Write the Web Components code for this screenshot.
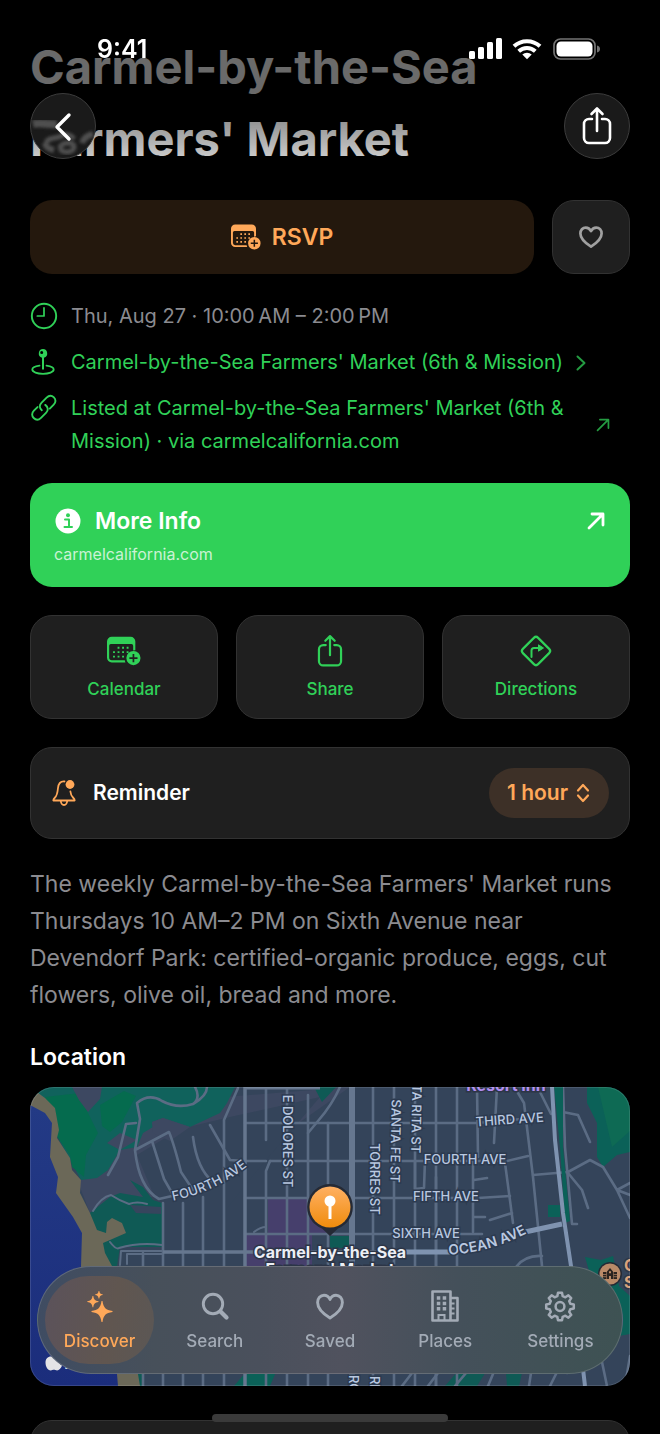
<!DOCTYPE html>
<html lang="en">
<head>
<meta charset="utf-8">
<meta name="viewport" content="width=device-width, initial-scale=1">
<title>Carmel-by-the-Sea Farmers' Market</title>
<style>
    :root {
        --green: #30d158;
        --orange: #ffa859;
        --card: #1f1f1f;
        --line: #323232;
        --muted: #8b8b90;
    }
    body {
        margin: 0;
        height: 100vh;
        overflow: hidden;
        background: #000;
        color: #fff;
        font-family: Inter, "Liberation Sans", sans-serif;
    }
</style>
</head>
<body>
<event-screen></event-screen>

<script>
const icons = {
    back: ['0 0 32 32', '<path d="M21 4 9 16l12 12" fill="none" stroke="currentColor" stroke-width="3.4" stroke-linecap="round" stroke-linejoin="round"/>'],
    share: ['0 0 32 40', '<g fill="none" stroke="currentColor" stroke-width="2.6" stroke-linecap="round" stroke-linejoin="round"><path d="M11 13H8a5 5 0 0 0-5 5v14a5 5 0 0 0 5 5h16a5 5 0 0 0 5-5V18a5 5 0 0 0-5-5h-3M16 25V3M10.500 8 16 2.500 21.500 8"/></g>'],
    calendar: ['0 0 36 30', '<path fill="currentColor" fill-rule="evenodd" d="M5 0h20a5 5 0 0 1 5 5v9.200a8.500 8.500 0 0 0-2.300.400V9.500a1.800 1.800 0 0 0-1.800-1.800H4.100a1.800 1.800 0 0 0-1.800 1.800V22a2.800 2.800 0 0 0 2.800 2.800h13.700a9 9 0 0 0 .7 2.300H5a5 5 0 0 1-5-5V5a5 5 0 0 1 5-5z"/><path fill="currentColor" d="M11.200 10.500h2v2h-2zM16 10.500h2v2h-2zM20.800 10.500h2v2h-2zM6.400 15.200h2v2h-2zM11.200 15.200h2v2h-2zM16 15.200h2v2h-2zM20.800 15.200h2v2h-2zM6.400 19.900h2v2h-2zM11.200 19.900h2v2h-2zM16 19.900h2v2h-2z"/><path fill="currentColor" fill-rule="evenodd" d="M28 15a7.500 7.500 0 1 1 0 15 7.500 7.500 0 0 1 0-15zm-.9 3.200v3.400h-3.400v1.800h3.400v3.400h1.800v-3.400h3.400v-1.800h-3.400v-3.400z"/>'],
    heart: ['0 0 28 26', '<path d="M14 23.500C10 21 2.500 15.500 2.500 9.300 2.500 5.500 5 2.800 8.300 2.800c2.500 0 4.500 1.400 5.700 3.800 1.200-2.400 3.200-3.800 5.700-3.800 3.300 0 5.800 2.700 5.800 6.500 0 6.200-7.500 11.700-11.500 14.200z" fill="none" stroke="currentColor" stroke-width="2.900" stroke-linejoin="round"/>'],
    clock: ['0 0 26 26', '<circle cx="13" cy="13" r="11.300" fill="none" stroke="currentColor" stroke-width="1.800"/><path d="M13 5.500V13H6.800" fill="none" stroke="currentColor" stroke-width="1.600" stroke-linecap="round" stroke-linejoin="round"/>'],
    pin: ['0 0 26 28', '<path fill="currentColor" fill-rule="evenodd" d="M12 1a4.500 4.500 0 0 1 1 8.800V21.500h-2V9.800A4.500 4.500 0 0 1 12 1zm-1.300 1.900a1.500 1.500 0 1 0 0 3 1.500 1.500 0 0 0 0-3z"/><path d="M8.500 17.700c-4.200.500-7.200 2-7.200 3.900 0 2.400 4.800 4.200 10.700 4.200s10.700-1.800 10.700-4.200c0-1.900-3-3.400-7.200-3.900" fill="none" stroke="currentColor" stroke-width="1.800" stroke-linecap="round"/>'],
    link: ['0 0 28 28', '<g fill="none" stroke="currentColor" stroke-width="1.900" stroke-linecap="round"><path d="M11.800 16.200c-2.600-2.200-2.600-5.200-.4-7.400l5.200-5.200c2.300-2.300 5.200-2.300 7.300-.2s2.100 5-.2 7.300l-3.900 3.900"/><path d="M15.300 10.900c2.900 2 3.200 5.400.9 7.700l-5.200 5.200c-2.300 2.300-5.200 2.300-7.300.2s-2.100-5 .2-7.300l3.600-3.600"/></g>'],
    chevron: ['0 0 10 16', '<path d="M1.500 1.500 8.500 8l-7 6.500" fill="none" stroke="currentColor" stroke-width="2" stroke-linecap="round" stroke-linejoin="round"/>'],
    out: ['0 0 18 18', '<path d="M2 16 15.500 2.500M5 2h11v11" fill="none" stroke="currentColor" stroke-width="var(--stroke, 2)" stroke-linecap="round" stroke-linejoin="round"/>'],
    info: ['0 0 26 26', '<circle cx="13" cy="13" r="12.500" fill="currentColor"/><circle cx="13" cy="7.300" r="2" fill="#30d158"/><path d="M10 11.500h4v7.300M9.500 19h7.500" fill="none" stroke="#30d158" stroke-width="2" stroke-linecap="round" stroke-linejoin="round"/>'],
    directions: ['0 0 34 34', '<rect x="6.200" y="6.200" width="21.600" height="21.600" rx="3" transform="rotate(45 17 17)" fill="none" stroke="currentColor" stroke-width="2.200"/><path d="M12.500 23v-6.500a2.500 2.500 0 0 1 2.500-2.500h4" fill="none" stroke="currentColor" stroke-width="2" stroke-linecap="round"/><path d="M19.500 10.800v6.400l5-3.200z" fill="currentColor" stroke="currentColor" stroke-linejoin="round"/>'],
    bell: ['0 0 26 28', '<g fill="none" stroke="currentColor" stroke-width="1.800" stroke-linecap="round" stroke-linejoin="round"><path d="M13.500 2.500C10 2.200 7.500 4.500 7 9c-.5 5-.8 7.500-3 9.500-1.200 1.200-1.800 1.900-1.700 3h21.400c.1-1.100-.5-1.800-1.700-3-1.600-1.500-2.300-3.200-2.600-6"/><path d="M9.800 22c.3 2.600 1.600 4 3.200 4s2.900-1.400 3.200-4"/></g><circle cx="19" cy="5.500" r="4.400" fill="currentColor"/>'],
    updown: ['0 0 14 20', '<path d="M2 7.500 7 2l5 5.500M2 12.500 7 18l5-5.500" fill="none" stroke="currentColor" stroke-width="2.200" stroke-linecap="round" stroke-linejoin="round"/>'],
    sparkles: ['0 0 32 34', '<path fill="currentColor" d="M18.500 12c.9 6.700 3.300 9.100 10 10v1c-6.700.9-9.100 3.300-10 10h-1c-.9-6.700-3.300-9.100-10-10v-1c6.700-.9 9.100-3.300 10-10zM9.300 7c.5 3.500 1.700 4.700 5.200 5.200v.8c-3.500.5-4.700 1.700-5.200 5.200h-.8c-.5-3.500-1.700-4.700-5.200-5.200v-.8C6.800 11.700 8 10.500 8.500 7zM15.300 2c.3 2.300 1.200 3.100 3.500 3.400v.7c-2.300.3-3.200 1.200-3.500 3.500h-.7c-.3-2.300-1.200-3.200-3.500-3.500v-.7c2.300-.3 3.200-1.100 3.500-3.400z"/>'],
    search: ['0 0 32 34', '<circle cx="14" cy="15" r="9.700" fill="none" stroke="currentColor" stroke-width="2.900"/><path d="m21.500 22.500 6 6" stroke="currentColor" stroke-width="4.200" stroke-linecap="round"/>'],
    saved: ['0 0 32 34', '<path d="M16 29C11.600 26.300 3.600 20.500 3.600 13.500 3.600 9.300 6.400 6.300 10 6.300c2.700 0 4.700 1.500 6 4.100 1.300-2.600 3.300-4.100 6-4.100 3.600 0 6.400 3 6.400 7.200 0 7-8 12.800-12.400 15.500z" fill="none" stroke="currentColor" stroke-width="2.900" stroke-linejoin="round"/>'],
    places: ['0 0 32 34', '<path d="M3.500 2.500h18v29h-18zM21.500 9h7v22.500h-7" fill="none" stroke="currentColor" stroke-width="2.600" stroke-linejoin="round"/><path fill="currentColor" d="M7.800 7.300h3.500v3.500H7.800zM13.700 7.300h3.500v3.500h-3.500zM7.800 12.700h3.500v3.500H7.800zM13.700 12.700h3.500v3.500h-3.500zM7.800 18.100h3.500v3.500H7.800zM13.700 18.100h3.500v3.500h-3.500zM22 13.500h3.500v2H22zM22 18.500h3.500v2H22zM22 23.500h3.500v2H22z"/><path d="M9.500 31v-5h6v5" fill="none" stroke="currentColor" stroke-width="2"/>'],
    settings: ['0 0 32 34', '<g fill="none" stroke="currentColor" stroke-width="2.500" stroke-linejoin="round"><path d="M13.300 7.200 14 3.700h4l.7 3.500 2.700 1.100 3-2 2.800 2.800-2 3 1.100 2.700 3.500.7v4l-3.500.7-1.100 2.700 2 3-2.800 2.800-3-2-2.700 1.100-.7 3.500h-4l-.7-3.500-2.700-1.100-3 2-2.800-2.800 2-3-1.100-2.700-3.500-.7v-4l3.500-.7 1.100-2.700-2-3 2.800-2.800 3 2z"/><circle cx="16" cy="17.500" r="4.400"/></g>'],
    signal: ['0 0 33 22', '<g fill="currentColor"><rect y="13" width="6" height="8" rx="1.500"/><rect x="9" y="9" width="6" height="12" rx="1.500"/><rect x="18" y="4" width="6" height="17" rx="1.500"/><rect x="27" y="0" width="6" height="21" rx="1.500"/></g>'],
    wifi: ['0 0 30 22', '<path d="M2 8.300a19 19 0 0 1 26 0M6.700 13.200a12.200 12.200 0 0 1 16.600 0" fill="none" stroke="currentColor" stroke-width="4"/><path fill="currentColor" d="m15 21.300-4.700-4.700a7 7 0 0 1 9.400 0z"/>'],
    battery: ['0 0 47 22', '<rect x="1" y="1" width="41" height="20" rx="6.500" fill="none" stroke="#737373" stroke-width="1.700"/><rect x="3.500" y="3.500" width="36" height="15" rx="4.500" fill="currentColor"/><path d="M44 7.500c2 .5 3 1.800 3 3.500s-1 3-3 3.500z" fill="#737373"/>']
};

class AppIcon extends HTMLElement {
    constructor() {
        super();
        const [box, shape] = icons[this.getAttribute("name")];

        this.attachShadow({ mode: 'open' });
        this.shadowRoot.innerHTML = `
            <style>
                :host { display: block; flex: none; width: 32px; height: 32px; }
                svg { display: block; width: 100%; height: 100%; }
            </style>
            <svg viewBox="${box}" aria-hidden="true">${shape}</svg>
        `;
    }
}

class StatusBar extends HTMLElement {
    constructor() {
        super();
        this.attachShadow({ mode: 'open' });
        this.shadowRoot.innerHTML = `
            <style>
                :host {
                    display: flex;
                    align-items: center;
                    height: 24px;
                    padding: 37px 60px 0 97px;
                    font-size: 25px;
                    line-height: 24px;
                    font-weight: 600;
                }
                time { flex: 1; }
                app-icon { height: 22px; }
                .signal { width: 33px; }
                .wifi { width: 30px; margin: 0 11px 0 10px; }
                .battery { width: 47px; }
            </style>
            <time>9:41</time>
            <app-icon class="signal" name="signal"></app-icon>
            <app-icon class="wifi" name="wifi"></app-icon>
            <app-icon class="battery" name="battery"></app-icon>
        `;
    }
}

class RoundButton extends HTMLElement {
    constructor() {
        super();
        this.attachShadow({ mode: 'open' });
        this.shadowRoot.innerHTML = `
            <style>
                :host { display: block; width: 66px; height: 66px; }
                button {
                    display: grid;
                    place-items: center;
                    width: 100%;
                    height: 100%;
                    padding: 0;
                    overflow: hidden;
                    border: 1px solid #3c3c3c;
                    border-radius: 50%;
                    background: #1a1a1a;
                    color: #fff;
                }
                button > *, ::slotted(*) { grid-area: 1 / 1; }
            </style>
            <button aria-label="${this.getAttribute("label")}"><slot></slot></button>
        `;
    }
}

class TopBar extends HTMLElement {
    constructor() {
        super();
        this.attachShadow({ mode: 'open' });
        this.shadowRoot.innerHTML = `
            <style>
                :host {
                    display: block;
                    height: 190px;
                    background: linear-gradient(rgba(0,0,0,.55) 0, rgba(0,0,0,.55) 94px, rgba(0,0,0,.12) 160px, transparent);
                }
                .actions {
                    display: flex;
                    justify-content: space-between;
                    padding: 32px 30px 0;
                }
                .glass { width: 66px; height: 66px; }
                .back { width: 32px; height: 32px; }
                .share { width: 32px; height: 40px; }
            </style>
            <status-bar></status-bar>
            <div class="actions">
                <round-button label="Back">
                    <svg class="glass" viewBox="0 0 66 66" aria-hidden="true">
                        <defs><filter id="soft"><feGaussianBlur stdDeviation="1.5"/></filter></defs>
                        <g fill="none" stroke="#505050" filter="url(#soft)">
                            <path d="M2 30c8-2 15 1 24 0" stroke-width="8"/>
                            <path d="M15 49c2-6 9-4 15-7 5-3 10-1 13 3M29 54c1-6 14-7 14-1s-12 7-14 1" stroke-width="5"/>
                            <path d="M14 49c1 5 5 6 9 7M62 40c-5 1-9 4-11 9" stroke-width="6"/>
                        </g>
                    </svg>
                    <app-icon class="back" name="back"></app-icon>
                </round-button>
                <round-button label="Share">
                    <app-icon class="share" name="share"></app-icon>
                </round-button>
            </div>
        `;
    }
}

class RsvpRow extends HTMLElement {
    constructor() {
        super();
        this.attachShadow({ mode: 'open' });
        this.shadowRoot.innerHTML = `
            <style>
                :host { display: flex; gap: 18px; height: 74px; }
                button {
                    display: flex;
                    align-items: center;
                    justify-content: center;
                    padding: 0;
                    font: inherit;
                    border-radius: 22px;
                }
                .rsvp {
                    flex: 1;
                    gap: 11px;
                    border: 0;
                    background: #24180d;
                    color: var(--orange);
                    font-size: 23px;
                    font-weight: 600;
                }
                .rsvp app-icon { width: 30px; height: 26px; }
                .save {
                    width: 78px;
                    border: 1px solid var(--line);
                    background: var(--card);
                    color: #a0a0a0;
                }
                .save app-icon { width: 26px; height: 24px; }
            </style>
            <button class="rsvp"><app-icon name="calendar"></app-icon>RSVP</button>
            <button class="save" aria-label="Save"><app-icon name="heart"></app-icon></button>
        `;
    }
}

class DetailRow extends HTMLElement {
    constructor() {
        super();
        const href = this.getAttribute("href");
        const end = this.getAttribute("end");
        const tag = href ? 'a' : 'div';

        this.attachShadow({ mode: 'open' });
        this.shadowRoot.innerHTML = `
            <style>
                :host { display: block; font-size: 20px; line-height: 33px; }
                .row {
                    display: flex;
                    gap: 13px;
                    padding-right: 20px;
                    color: var(--muted);
                    text-decoration: none;
                }
                a.row { color: var(--green); }
                .lead { width: 28px; height: 28px; margin-top: 2px; color: var(--green); }
                .end { align-self: center; opacity: .75; --stroke: 2.200; }
                .end[name="chevron"] { width: 10px; height: 16px; }
                .end[name="out"] { width: 14px; height: 14px; margin-left: 3px; }
            </style>
            <${tag} class="row" ${href ? `href="${href}"` : ''}>
                <app-icon class="lead" name="${this.getAttribute("icon")}"></app-icon>
                <span><slot></slot></span>
                ${end ? `<app-icon class="end" name="${end}"></app-icon>` : ''}
            </${tag}>
        `;
    }
}

class InfoBanner extends HTMLElement {
    constructor() {
        super();
        this.attachShadow({ mode: 'open' });
        this.shadowRoot.innerHTML = `
            <style>
                :host { display: block; }
                a {
                    display: block;
                    padding: 22px 25px 20px 24px;
                    border-radius: 22px;
                    background: var(--green);
                    color: #fff;
                    text-decoration: none;
                }
                .head {
                    display: flex;
                    align-items: center;
                    font-size: 23px;
                    line-height: 32px;
                    font-weight: 600;
                }
                .head span { flex: 1; margin-left: 13px; }
                .head app-icon { width: 28px; height: 26px; }
                .head .out { width: 18px; height: 18px; --stroke: 2.800; }
                small {
                    display: block;
                    margin-top: 4px;
                    font-size: 16px;
                    line-height: 26px;
                    color: rgba(255, 255, 255, .75);
                }
            </style>
            <a href="#info">
                <div class="head">
                    <app-icon name="info"></app-icon>
                    <span>More Info</span>
                    <app-icon class="out" name="out"></app-icon>
                </div>
                <small><slot></slot></small>
            </a>
        `;
    }
}

class ActionCard extends HTMLElement {
    constructor() {
        super();
        this.attachShadow({ mode: 'open' });
        this.shadowRoot.innerHTML = `
            <style>
                :host { display: block; }
                button {
                    display: flex;
                    flex-direction: column;
                    align-items: center;
                    gap: 9px;
                    width: 100%;
                    padding: 18px 0 17px;
                    border: 1px solid var(--line);
                    border-radius: 22px;
                    background: var(--card);
                    color: var(--green);
                    font: 500 17px/24px Inter, "Liberation Sans", sans-serif;
                }
                app-icon { width: 34px; height: 34px; }
            </style>
            <button>
                <app-icon name="${this.getAttribute("icon")}"></app-icon>
                <slot></slot>
            </button>
        `;
    }
}

class ReminderRow extends HTMLElement {
    constructor() {
        super();
        this.attachShadow({ mode: 'open' });
        this.shadowRoot.innerHTML = `
            <style>
                :host {
                    display: flex;
                    align-items: center;
                    padding: 20px;
                    border: 1px solid var(--line);
                    border-radius: 22px;
                    background: var(--card);
                    font-size: 21px;
                    line-height: 28px;
                    font-weight: 600;
                }
                .bell { width: 26px; height: 28px; color: var(--orange); }
                label { flex: 1; margin-left: 16px; }
                .pick { display: grid; align-items: center; color: var(--orange); }
                .pick > * { grid-area: 1 / 1; }
                select {
                    appearance: none;
                    width: 120px;
                    height: 50px;
                    padding: 0 18px;
                    border: 0;
                    border-radius: 25px;
                    background: #3d3027;
                    color: inherit;
                    font: inherit;
                }
                .pick app-icon {
                    justify-self: end;
                    width: 14px;
                    height: 20px;
                    margin-right: 19px;
                    pointer-events: none;
                }
            </style>
            <app-icon class="bell" name="bell"></app-icon>
            <label for="lead">Reminder</label>
            <div class="pick">
                <select id="lead"><option>1 hour</option></select>
                <app-icon name="updown"></app-icon>
            </div>
        `;
    }
}

class LocationMap extends HTMLElement {
    constructor() {
        super();
        this.attachShadow({ mode: 'open' });
        this.shadowRoot.innerHTML = `
            <style>
                :host {
                    display: block;
                    height: 299px;
                    overflow: hidden;
                    border-radius: 24px;
                    background: #34445a;
                }
                svg { display: block; width: 100%; height: 100%; }
                text { font-family: Inter, "Liberation Sans", sans-serif; }
                .street text {
                    font-size: 13px;
                    font-weight: 500;
                    fill: #b9c8e0;
                    stroke: #2c3a4f;
                    stroke-width: 3px;
                    paint-order: stroke;
                    text-anchor: middle;
                }
                .street .major { font-size: 14px; font-weight: 600; }
                .place {
                    font-size: 16px;
                    font-weight: 700;
                    fill: #eceff5;
                    stroke: #2c3547;
                    stroke-width: 3px;
                    paint-order: stroke;
                    text-anchor: middle;
                }
            </style>
            <svg viewBox="0 0 600 299" preserveAspectRatio="xMidYMid slice" role="img" aria-label="Map">
                <defs>
                    <linearGradient id="water" x2="0" y2="1"><stop stop-color="#233a85"/><stop offset="1" stop-color="#1b2d7c"/></linearGradient>
                    <linearGradient id="pin" x2="0" y2="1"><stop stop-color="#ffb063"/><stop offset="1" stop-color="#f08c0c"/></linearGradient>
                    <path id="fourth" d="M141 114Q184 106 219 78"/>
                    <path id="ocean" d="M412 168Q460 167 503 143"/>
                </defs>

                <!-- land cover -->
                <path fill="#3d4861" d="M120 30 195 10 320 0 220 70 140 110 100 110 60 126 48 95 90 60z"/>
                <path fill="#34445a" d="M107 68 150 42 200 30 290 10 230 80 190 130 133 130z"/>
                <path fill="#10625c" d="M0 0h205l-8 16-7 10-30 14-27-9-11 4 1 5-10 6-6 14-17 3-12 20-11 8-16 2z"/>
                <path fill="#056b4e" d="M15 10 50 6l8 20 10 20-12 22-2 22-12-10-2-12-14-20zM70 18l24-14 12 5-14 26-12 10-8-6z"/>
                <path fill="#3d4861" d="M42 0h30l-2 12-12 13-9-12zM77 56l13-10 17 7-17 10zM122 35l11-4 27 9-20 14-17-8z"/>
                <path fill="#0f5a55" d="M60 126 80 110 90 106l23 4-13-17 13 7 10 13 9 3 1 44H90l-3 19h-6l-21-33z"/>
                <path fill="#36455d" d="m100 118 31 2v7l-25-1z"/>
                <path fill="#463f6c" d="M238 112h64v35h-20v33h-67v-33h23z"/>
                <path fill="#0f5a55" d="M300 149h22v12h-22zM284 0h22l-14 15z"/>
                <path fill="#0b6158" d="M557 0h43v65l-13 3-14 12-6-10V36l-10-20zM518 118h12v12h-12zM555 170l16 3 12-4 6 30 11 10v38l-22 4-14-50zM204 299l12-14h30l-6 14z"/>
                <path fill="#107051" d="M568 0h32v44l-18 16z" opacity=".6"/>
                <path fill="#0f5a55" d="M415 299l14-16h28l-10 16zM476 286h16l-3 13h-12zM100 280h13v19h-16z"/>

                <!-- coast -->
                <path fill="#6b6858" d="M0 0 15 11l10 10 4 22-2 8 13 20 2 12 9 10-1 13 10 20 7 17 9 3 1-11 5-4 10 5 4 10-16 7-7 3 2 10 7 13 18 60 10 60H70L0 80z"/>
                <path fill="url(#water)" d="M0 18l15 8 7 10-2 34 8 20-2 16 17 24 9 16-1 34 14 60 22 47 1 12H0z"/>

                <!-- small roads -->
                <g fill="none" stroke="#5b6c84" stroke-width="2.600" stroke-linejoin="round" stroke-linecap="round">
                    <path d="M208 1 194 33v266M236 0v53M240 74l-4 10v215M257 0v299M278 8v291M298 36v263M343 0v299M364 0v299M385 0v299M406 0v299M427 0v299M133 116v183M153 116v183M173 110v189M113 166v133"/>
                    <path d="M215 36h232l66-6M240 74h237l21-5M215 111h233l32-2M215 147h237M236 74h-22l-14-1-20-35"/>
                    <path d="M447 0l1 70M443 76v69M467 0l-3 56M444 93l13-2M443 130h12M460 133l22-7M475 76l8 60M488 6l6 10 9 74 9 89M385 75v27l9-1 1-28M406 90v209M510 5l11 22"/>
                    <path d="M533 25l15 3 12 27M503 88l35-3 22-12 13 7 14 23 13 28M587 103l13-7M587 103l13 5M538 86l14 17 6 18M533 0l2 60 7 77h5M486 180q9-12 26-11"/>
                    <path d="M78 88l10-18 8-33 10-1M105 63 110 32l-3-16q12-10 25-2 15 8 31 3 8-6 2-17M163 17q14-8 14-17M105 63l34-18q5 12 12 40l12 18M122 54l12 38 8 14M163 50q4 32 20 45M105 63q4 38 24 49l13-3M310 0q-8 18-22 34l-10 12"/>
                    <path d="M90 178l1-14h42v3H97v10M300 36h-2M63 124q8-14 18-16 9 6 18 9 8-3 18 0M80 155q6 8 9 6 20-6 43-3M224 145q6-5 12-5" stroke-width="2"/>
                    <path d="M372 299l20-26M398 299l20-26M425 299l22-26M463 287l-5 12M499 299l4-26M520 299l8-16 14-5M572 275l5 24M595 299l5-30M520 274l17 12"/>
                </g>

                <!-- main roads -->
                <g fill="none" stroke="#66778f" stroke-linejoin="round">
                    <path d="M215 0v299M133 165h290" stroke-width="3.500"/>
                    <path d="M215 1h75" stroke-width="3"/>
                    <path d="M322 0v299" stroke-width="6"/>
                    <path d="M376 165h46M495 145l37-8" stroke="#7f93b0" stroke-width="5"/>
                    <path d="M524 0h9l0 60 7 74-5 2-5-76z" fill="#0b6158" stroke="none"/>
                    <path d="M522 0l3 53 8 73 8 53 14 120" stroke="#7f93b0" stroke-width="4"/>
                </g>

                <g class="street">
                    <text><textPath href="#fourth" startOffset="50%">FOURTH AVE</textPath></text>
                    <text class="major"><textPath href="#ocean" startOffset="50%">OCEAN AVE</textPath></text>
                    <text transform="translate(253 54) rotate(90)">E DOLORES ST</text>
                    <text transform="translate(340 92) rotate(90)">TORRES ST</text>
                    <text transform="translate(361 54) rotate(91)">SANTA FE ST</text>
                    <text transform="translate(382 18) rotate(91)">SANTA RITA ST</text>
                    <text transform="translate(480 37) rotate(-4)">THIRD AVE</text>
                    <text x="435" y="77">FOURTH AVE</text>
                    <text x="416" y="114">FIFTH AVE</text>
                    <text x="396" y="151">SIXTH AVE</text>
                    <text transform="translate(319 297) rotate(90)">RG</text>
                    <text transform="translate(340 297) rotate(90)">RE</text>
                </g>

                <text class="place" x="476" y="4" style="fill:#b08cf0">Resort Inn</text>
                <text class="place" x="300" y="171">Carmel-by-the-Sea</text>
                <text class="place" x="300" y="188">Farmers' Market</text>

                <!-- pin -->
                <path fill="#252a35" d="M300 97a23 23 0 0 1 8 44.500L300 149l-8-7.500A23 23 0 0 1 300 97z"/>
                <circle cx="300" cy="120" r="20.500" fill="url(#pin)"/>
                <circle cx="300" cy="114" r="5.500" fill="#fff"/>
                <path stroke="#fff" stroke-width="3" d="M300 119v13"/>

                <!-- school -->
                <circle cx="580" cy="187" r="12" fill="#252a35"/>
                <circle cx="580" cy="187" r="10.500" fill="#b98a68"/>
                <path fill="#2b2420" fill-rule="evenodd" d="M573 185h3.500v7H573zM583.500 185h3.500v7h-3.500zM577 184.500l3-3.500 3 3.500v7.500h-2v-3h-2v3h-2zm2-.2v2h2v-2z"/>
                <path stroke="#b98a68" stroke-width=".7" d="M573 187.500h3.500M573 189.700h3.500M583.500 187.500h3.500M583.500 189.700h3.500"/>
                <g class="place" style="fill:#d9a27b; text-anchor:start"><text x="594" y="184">C</text><text x="594" y="201">S</text></g>

                <!-- attribution -->
                <path fill="#e4e4e6" d="M24 270c3-1.600 6-.7 7.400 1.200-2.800 2-2.400 6 .7 7.300-1.200 3-3 4.900-5 4.900-1.400 0-1.900-.6-3.200-.6s-1.900.6-3.200.6c-3 0-5.200-4-5.200-8 0-4.400 3.500-7.300 8.500-5.400z"/>
                <text x="34" y="282" font-size="18" font-weight="600" fill="#e4e4e6">Maps</text>
                <rect x=".5" y=".5" width="599" height="298" rx="23.500" fill="none" stroke="#fff" stroke-opacity=".12"/>
            </svg>
        `;
    }
}

class TabItem extends HTMLElement {
    constructor() {
        super();
        this.attachShadow({ mode: 'open' });
        this.shadowRoot.innerHTML = `
            <style>
                :host { display: block; flex: 1; }
                a {
                    display: flex;
                    flex-direction: column;
                    align-items: center;
                    gap: 6px;
                    margin: 0 3px;
                    padding: 13px 0 11px;
                    border-radius: 44px;
                    color: #a3abb6;
                    font-size: 17px;
                    line-height: 24px;
                    font-weight: 500;
                    text-decoration: none;
                }
                :host([active]) a {
                    background: linear-gradient(100deg, #5b525b, #605650 60%, #5b5755);
                    color: var(--orange);
                }
                app-icon { width: 32px; height: 34px; }
            </style>
            <a href="#"><app-icon name="${this.getAttribute("icon")}"></app-icon><slot></slot></a>
        `;
    }
}

class TabBar extends HTMLElement {
    constructor() {
        super();
        this.attachShadow({ mode: 'open' });
        this.shadowRoot.innerHTML = `
            <style>
                :host { display: block; }
                nav {
                    display: flex;
                    padding: 9px 4px;
                    border: 1px solid rgba(255, 255, 255, .16);
                    border-radius: 54px;
                    background: linear-gradient(90deg, #3f4c62, #47505a 20%, #4a505c 38%, #50525e 52%, #44505a 72%, #3e5253);
                }
            </style>
            <nav><slot></slot></nav>
        `;
    }
}

class EventScreen extends HTMLElement {
    constructor() {
        super();
        this.attachShadow({ mode: 'open' });
        this.shadowRoot.innerHTML = `
            <style>
                :host { display: block; height: 100%; }
                main {
                    box-sizing: border-box;
                    height: 100%;
                    overflow-y: auto;
                    scrollbar-width: none;
                    padding: 31px 30px 0;
                }
                h1 {
                    margin: 0 0 25px;
                    font-size: 47px;
                    line-height: 72px;
                    font-weight: 700;
                    color: #ebebeb;
                }
                .details {
                    display: grid;
                    gap: 13px;
                    margin: 26px 0 25px;
                }
                .actions {
                    display: grid;
                    grid-template-columns: repeat(3, 1fr);
                    gap: 18px;
                    margin: 28px 0;
                }
                p {
                    margin: 27px 0;
                    font-size: 23px;
                    line-height: 37px;
                    color: var(--muted);
                }
                h2 {
                    margin: 0 0 14px;
                    font-size: 23px;
                    line-height: 32px;
                    font-weight: 600;
                }
                .next {
                    height: 120px;
                    margin-top: 34px;
                    border: 1px solid var(--line);
                    border-radius: 22px;
                    background: var(--card);
                }
                top-bar { position: fixed; inset: 0 0 auto; }
                tab-bar { position: fixed; inset: auto 37px 60px; }
                .home {
                    position: fixed;
                    left: 50%;
                    bottom: 12px;
                    width: 236px;
                    height: 8px;
                    margin-left: -118px;
                    border-radius: 4px;
                    background: #3a3a3a;
                }
            </style>
            <main>
                <h1>Carmel-by-the-Sea Farmers' Market</h1>
                <rsvp-row></rsvp-row>
                <div class="details">
                    <detail-row icon="clock">Thu, Aug 27 · 10:00&#8239;AM – 2:00&#8239;PM</detail-row>
                    <detail-row icon="pin" href="#place" end="chevron">Carmel-by-the-Sea Farmers' Market (6th &amp; Mission)</detail-row>
                    <detail-row icon="link" href="#source" end="out">Listed at Carmel-by-the-Sea Farmers' Market (6th &amp; Mission) · via carmelcalifornia.com</detail-row>
                </div>
                <info-banner>carmelcalifornia.com</info-banner>
                <div class="actions">
                    <action-card icon="calendar">Calendar</action-card>
                    <action-card icon="share">Share</action-card>
                    <action-card icon="directions">Directions</action-card>
                </div>
                <reminder-row></reminder-row>
                <p>The weekly Carmel-by-the-Sea Farmers' Market runs Thursdays 10 AM–2 PM on Sixth Avenue near Devendorf Park: certified-organic produce, eggs, cut flowers, olive oil, bread and more.</p>
                <h2>Location</h2>
                <location-map></location-map>
                <div class="next"></div>
            </main>
            <top-bar></top-bar>
            <tab-bar>
                <tab-item icon="sparkles" active>Discover</tab-item>
                <tab-item icon="search">Search</tab-item>
                <tab-item icon="saved">Saved</tab-item>
                <tab-item icon="places">Places</tab-item>
                <tab-item icon="settings">Settings</tab-item>
            </tab-bar>
            <div class="home"></div>
        `;
    }
}

customElements.define('app-icon', AppIcon);
customElements.define('status-bar', StatusBar);
customElements.define('round-button', RoundButton);
customElements.define('top-bar', TopBar);
customElements.define('rsvp-row', RsvpRow);
customElements.define('detail-row', DetailRow);
customElements.define('info-banner', InfoBanner);
customElements.define('action-card', ActionCard);
customElements.define('reminder-row', ReminderRow);
customElements.define('location-map', LocationMap);
customElements.define('tab-item', TabItem);
customElements.define('tab-bar', TabBar);
customElements.define('event-screen', EventScreen);
</script>
</body>
</html>
